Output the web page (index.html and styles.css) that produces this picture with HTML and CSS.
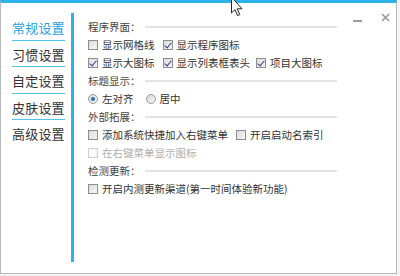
FILE: index.html
```html
<!DOCTYPE html>
<html lang="zh-CN">
<head>
    <meta charset="UTF-8">
    <title>设置</title>
    <link rel="stylesheet" href="styles.css">
</head>
<body>
<div class="window">

    <div class="win-btns">
        <span class="win-min"></span>
        <span class="win-close">
            <svg width="9" height="9" viewBox="0 0 9 9"><path d="M1 1L8 8M8 1L1 8" stroke="#9a9a9a" stroke-width="1.6"/></svg>
        </span>
    </div>

    <ul class="nav">
        <li class="active">常规设置</li>
        <li>习惯设置</li>
        <li>自定设置</li>
        <li>皮肤设置</li>
        <li class="last">高级设置</li>
    </ul>

    <div class="bar"></div>

    <div class="main">
        <div class="group">程序界面：</div>
        <div class="row">
            <label class="chk"><i class="box"></i>显示网格线</label>
            <label class="chk on"><i class="box"></i>显示程序图标</label>
        </div>
        <div class="row">
            <label class="chk on"><i class="box"></i>显示大图标</label>
            <label class="chk on tight"><i class="box"></i>显示列表框表头</label>
            <label class="chk on"><i class="box"></i>项目大图标</label>
        </div>

        <div class="group">标题显示：</div>
        <div class="row">
            <label class="radio on"><i class="dot"></i>左对齐</label>
            <label class="radio"><i class="dot"></i>居中</label>
        </div>

        <div class="group">外部拓展：</div>
        <div class="row">
            <label class="chk"><i class="box"></i>添加系统快捷加入右键菜单</label>
            <label class="chk"><i class="box"></i>开启启动名索引</label>
        </div>
        <div class="row">
            <label class="chk off"><i class="box"></i>在右键菜单显示图标</label>
        </div>

        <div class="group">检测更新：</div>
        <div class="row">
            <label class="chk"><i class="box"></i>开启内测更新渠道(第一时间体验新功能)</label>
        </div>
    </div>

    <svg class="cursor" width="16" height="20" viewBox="0 0 16 20">
        <path d="M1.5 -3 L1.5 13 L5 9.6 L7.6 15.6 L9.8 14.6 L7.3 8.8 L12 8.8 Z" fill="#fff" stroke="#222" stroke-width="1"/>
    </svg>
</div>
</body>
</html>
```

FILE: styles.css
```css
* {
    padding: 0;
    margin: 0;
    box-sizing: border-box;
}

ul {
    list-style: none;
}

body {
    background: #f4f4f4;
    font-family: "Noto Sans CJK SC", "Microsoft YaHei", sans-serif;
    color: #333;
}

.window {
    position: relative;
    width: 397px;
    height: 274px;
    background: #fff;
    border: 1px solid #b9b9b9;
    border-top: 3px solid #2cb3e8;
    display: flex;
}

/* 窗口按钮 */
.win-btns {
    position: absolute;
    top: 8px;
    right: 6px;
    display: flex;
    align-items: center;
    gap: 19px;
}

.win-min {
    width: 9px;
    height: 2px;
    margin-top: 7px;
    background: #9a9a9a;
}

.win-close {
    display: flex;
    height: 12px;
    align-items: center;
}

.cursor {
    position: absolute;
    left: 229px;
    top: -3px;
}

/* 左侧导航 */
.nav {
    width: 69px;
    padding: 11px 0 0 11px;
    font-size: 13px;
}

.nav li {
    width: 53px;
    height: 26.5px;
    line-height: 27px;
    border-bottom: 1px solid #52c1ee;
    white-space: nowrap;
    letter-spacing: 0.2px;
}

.nav li.last {
    border-bottom: none;
}

.nav .active {
    color: #1f9fe0;
}

.bar {
    width: 3px;
    margin: 10px 0 11px 1px;
    background: #2cb3e8;
}

/* 右侧内容 */
.main {
    flex: 1;
    padding: 15px 59px 0 14px;
    font-size: 10.5px;
    line-height: 18px;
}

.group {
    display: flex;
    align-items: center;
    color: #444;
    white-space: nowrap;
}

.group::after {
    content: "";
    flex: 1;
    height: 2px;
    margin-left: 4px;
    background: #e3e3e3;
}

.row {
    display: flex;
    align-items: center;
    white-space: nowrap;
}

.chk, .radio {
    display: flex;
    align-items: center;
    margin-right: 8px;
}

.chk.tight {
    margin-right: 6px;
}

.radio {
    margin-right: 12px;
}

.box {
    position: relative;
    width: 10px;
    height: 10px;
    margin-right: 4px;
    border: 1px solid #8e8e8e;
    background: linear-gradient(135deg, #dcdcdc, #f6f6f6);
}

.chk.on .box::after {
    content: "";
    position: absolute;
    left: 2px;
    top: 0;
    width: 3px;
    height: 6px;
    border-right: 1.5px solid #2b3f86;
    border-bottom: 1.5px solid #2b3f86;
    transform: rotate(40deg);
}

.chk.off {
    color: #b0b0b0;
}

.chk.off .box {
    border-color: #cfcfcf;
    background: #fafafa;
}

.dot {
    position: relative;
    width: 10px;
    height: 10px;
    margin-right: 4px;
    border-radius: 50%;
    border: 1px solid #9a9a9a;
    background: linear-gradient(135deg, #d8d8d8, #f6f6f6);
}

.radio.on .dot::after {
    content: "";
    position: absolute;
    left: 2px;
    top: 2px;
    width: 4px;
    height: 4px;
    border-radius: 50%;
    background: #2a6fb8;
}
```
